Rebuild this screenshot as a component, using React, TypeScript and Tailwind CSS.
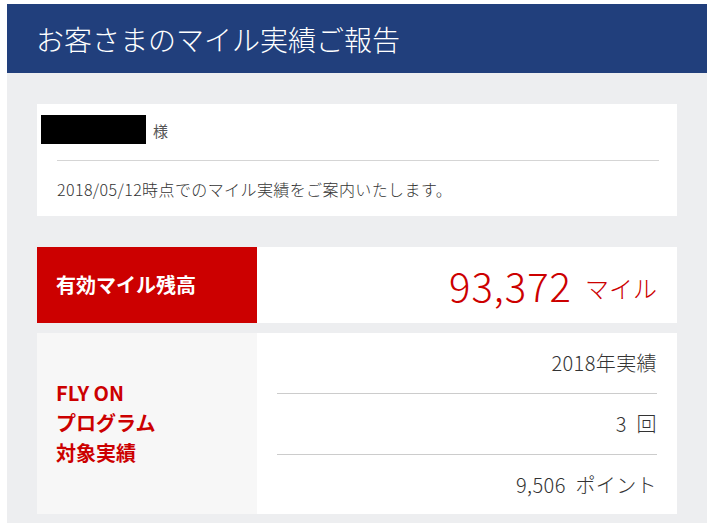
import React from "react";

const font = { fontFamily: '"Noto Sans CJK JP", "Noto Sans", sans-serif' };

export default function App() {
  return (
    <div className="min-h-[523px] bg-white pt-[4px] px-[7px]" style={font}>
      <div className="bg-[#edeef0] pb-[9px]">
        <header className="h-[69px] bg-[#213f7c] flex items-center pl-[29px]">
          <h1 className="text-[28px] font-light text-white leading-none">
            お客さまのマイル実績ご報告
          </h1>
        </header>
        <div className="px-[30px] pt-[31px] flex flex-col">
          {/* Customer card */}
          <section className="bg-white px-[20px]">
            <div className="h-[56px] flex items-center relative">
              <div className="absolute left-[-16px] top-[11px] w-[105px] h-[29px] bg-black" />
              <span className="ml-[96px] text-[15px] text-[#555] mt-[-2px]">様</span>
            </div>
            <div className="h-px bg-[#d5d5d5] mr-[-2px]" />
            <div className="h-[55px] flex items-center">
              <p className="text-[16px] text-[#333] font-light tracking-[0.4px]">
                2018/05/12時点でのマイル実績をご案内いたします。
              </p>
            </div>
          </section>

          {/* Mile balance */}
          <section className="mt-[31px] flex h-[76px] bg-white">
            <div className="w-[220px] bg-[#cc0000] flex items-center pl-[19px]">
              <span className="text-[20px] font-bold text-white">有効マイル残高</span>
            </div>
            <div className="flex-1 flex items-center justify-end pr-[20px]">
              <span className="text-[40px] font-light text-[#cc0000] leading-none tracking-[1px]">93,372</span>
              <span className="ml-[13px] text-[24px] font-light text-[#cc0000] leading-none mt-[6px]">マイル</span>
            </div>
          </section>

          {/* FLY ON */}
          <section className="mt-[10px] flex h-[181px] bg-white">
            <div className="w-[220px] bg-[#f7f7f7] flex items-center pl-[19px]">
              <p className="text-[20px] font-bold text-[#cc0000] leading-[30px] mt-[-2px]">
                FLY ON
                <br />
                プログラム
                <br />
                対象実績
              </p>
            </div>
            <div className="flex-1 px-[20px] flex flex-col text-[20px] font-light text-[#333] tracking-[0.4px]">
              <div className="h-[60px] flex items-center justify-end">2018年実績</div>
              <div className="h-px bg-[#cccccc]" />
              <div className="h-[60px] flex items-center justify-end">3&nbsp;&nbsp;回</div>
              <div className="h-px bg-[#cccccc]" />
              <div className="h-[59px] flex items-center justify-end">9,506&nbsp;&nbsp;ポイント</div>
            </div>
          </section>
        </div>
      </div>
    </div>
  );
}
